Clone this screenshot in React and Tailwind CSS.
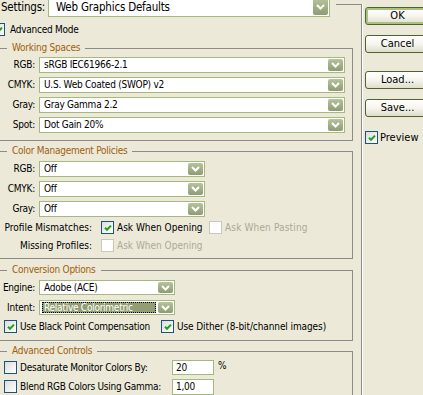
import React from "react";

const Chevron = () => (
  <svg width="9" height="6" viewBox="0 0 9 6">
    <path d="M1 1l3.5 3.5L8 1" stroke="#fff" strokeWidth="2" fill="none" />
  </svg>
);

const Tick = () => (
  <svg width="8" height="8" viewBox="0 0 8 8">
    <path d="M1 3.8l2 2L7 1.6" stroke="#21a121" strokeWidth="2" fill="none" />
  </svg>
);

const Select = ({ className, text, selected, textClass = "" }) => (
  <div className={`flex shrink-0 bg-white border border-[#a5b97f] p-px ${className}`}>
    {selected ? (
      <div className="flex-1 flex items-center ml-px mr-[2px] pl-[2px] bg-[#939d73] text-white outline-1 outline-dotted outline-black -outline-offset-1">
        {text}
      </div>
    ) : (
      <div className={`flex-1 flex items-center pl-[3px] ${textClass}`}>{text}</div>
    )}
    <div className="w-[15px] flex items-center justify-center rounded-[2px] bg-gradient-to-b from-[#b7c39c] to-[#8f9b73]">
      <Chevron />
    </div>
  </div>
);

const Check = ({ checked, disabled }) => (
  <div
    className={`w-[13px] h-[13px] shrink-0 flex items-center justify-center border ${
      disabled
        ? "border-[#cac8bb] bg-white"
        : "border-[#1c5180] bg-gradient-to-br from-[#dcdcd7] to-white"
    }`}
  >
    {checked && <Tick />}
  </div>
);

const Group = ({ title, className, children }) => (
  <fieldset className={`ml-[4px] w-[357px] border border-[#8b8b8b] ${className}`}>
    <legend className="ml-[10px] px-[5px] leading-[12px] text-[#a0600f]">{title}</legend>
    {children}
  </fieldset>
);

const Row = ({ label, children }) => (
  <div className="flex items-center">
    <div className="w-[38px] mr-[4px] text-right">{label}</div>
    {children}
  </div>
);

const Button = ({ children, primary, className = "" }) => (
  <div
    className={`w-[65px] h-[18px] shrink-0 flex items-center justify-center rounded-[3px] border border-[#4f6131] bg-gradient-to-b from-white via-[#f6f5ee] to-[#e0ddcc] text-[11px] tracking-normal ${
      primary ? "shadow-[inset_0_0_0_2px_#a9c27f]" : ""
    } ${className}`}
  >
    {children}
  </div>
);

export default function App() {
  return (
    <div className="w-[423px] h-[395px] overflow-hidden flex bg-[#ece9d8] text-black text-[10px] leading-[12px] tracking-[-0.25px] [font-family:'DejaVu_Sans_Condensed','Liberation_Sans',sans-serif]">
      <div className="-ml-[8px] -mt-[3px] w-[369px] shrink-0 flex flex-col">
        <div className="flex h-[20px] shrink-0">
          <div className="w-[56px] pl-[9px] flex items-center text-[11.5px] tracking-[-0.2px]">Settings:</div>
          <Select className="w-[282px] h-[20px]" text="Web Graphics Defaults" textClass="pl-[6px] text-[11.5px] tracking-[-0.2px]" />
          <div className="flex-1 ml-[6px] mt-[7px] border-t border-[#8b8b8b]" />
        </div>

        <div className="flex items-center mt-[6px] h-[13px]">
          <Check checked />
          <span className="ml-[5px]">Advanced Mode</span>
        </div>

        <Group title="Working Spaces" className="mt-[6px] pt-[3px] pb-[7px]">
          <div className="flex flex-col gap-[4px]">
            <Row label="RGB:"><Select className="w-[306px] h-[16px]" text="sRGB IEC61966-2.1" /></Row>
            <Row label="CMYK:"><Select className="w-[306px] h-[16px]" text="U.S. Web Coated (SWOP) v2" /></Row>
            <Row label="Gray:"><Select className="w-[306px] h-[16px]" text="Gray Gamma 2.2" /></Row>
            <Row label="Spot:"><Select className="w-[306px] h-[16px]" text="Dot Gain 20%" /></Row>
          </div>
        </Group>

        <Group title="Color Management Policies" className="mt-[4px] pt-[4px] pb-[6px]">
          <div className="flex flex-col gap-[4px]">
            <Row label="RGB:"><Select className="w-[166px] h-[16px]" text="Off" /></Row>
            <Row label="CMYK:"><Select className="w-[166px] h-[16px]" text="Off" /></Row>
            <Row label="Gray:"><Select className="w-[166px] h-[16px]" text="Off" /></Row>
          </div>
          <div className="flex items-center mt-[4px] h-[13px] tracking-normal">
            <div className="w-[95px] text-right">Profile Mismatches:</div>
            <div className="w-[108px] ml-[9px] flex items-center">
              <Check checked />
              <span className="ml-[3px]">Ask When Opening</span>
            </div>
            <Check disabled />
            <span className="ml-[3px] text-[#aca899] tracking-[0.15px]">Ask When Pasting</span>
          </div>
          <div className="flex items-center mt-[5px] h-[13px] tracking-normal">
            <div className="w-[95px] text-right">Missing Profiles:</div>
            <div className="ml-[9px] flex items-center">
              <Check disabled />
              <span className="ml-[3px] text-[#aca899]">Ask When Opening</span>
            </div>
          </div>
        </Group>

        <Group title="Conversion Options" className="mt-[5px] pt-[4px] pb-[7px]">
          <div className="flex flex-col gap-[5px]">
            <Row label="Engine:"><Select className="w-[136px] h-[15px]" text="Adobe (ACE)" /></Row>
            <Row label="Intent:"><Select className="w-[136px] h-[15px]" text="Relative Colorimetric" selected /></Row>
          </div>
          <div className="flex items-center mt-[5px] h-[13px] pl-[7px]">
            <div className="w-[157px] flex items-center">
              <Check checked />
              <span className="ml-[3px]">Use Black Point Compensation</span>
            </div>
            <Check checked />
            <span className="ml-[3px] tracking-[-0.1px]">Use Dither (8-bit/channel images)</span>
          </div>
        </Group>

        <Group title="Advanced Controls" className="mt-[4px] pt-[3px] pb-[6px]">
          <div className="flex items-center h-[15px] pl-[7px]">
            <div className="w-[168px] flex items-center">
              <Check />
              <span className="ml-[3px]">Desaturate Monitor Colors By:</span>
            </div>
            <div className="w-[42px] h-[15px] bg-white border border-[#a5b97f] pl-[3px] flex items-center">20</div>
            <span className="ml-[4px] self-start">%</span>
          </div>
          <div className="flex items-center h-[15px] mt-[4px] pl-[7px]">
            <div className="w-[168px] flex items-center">
              <Check />
              <span className="ml-[3px]">Blend RGB Colors Using Gamma:</span>
            </div>
            <div className="w-[42px] h-[16px] bg-white border border-[#a5b97f] pl-[3px] flex items-center">1,00</div>
          </div>
        </Group>
      </div>

      <div className="w-[2px] shrink-0 mt-[4px] border-l border-[#8b8b8b] bg-white" />

      <div className="flex flex-col pl-[2px]">
        <Button primary className="mt-[7px]">OK</Button>
        <Button className="mt-[10px]">Cancel</Button>
        <Button className="mt-[18px]">Load...</Button>
        <Button className="mt-[10px]">Save...</Button>
        <div className="flex items-center mt-[14px] h-[13px]">
          <Check checked />
          <span className="ml-[2px] text-[11px] tracking-normal">Preview</span>
        </div>
      </div>
    </div>
  );
}
